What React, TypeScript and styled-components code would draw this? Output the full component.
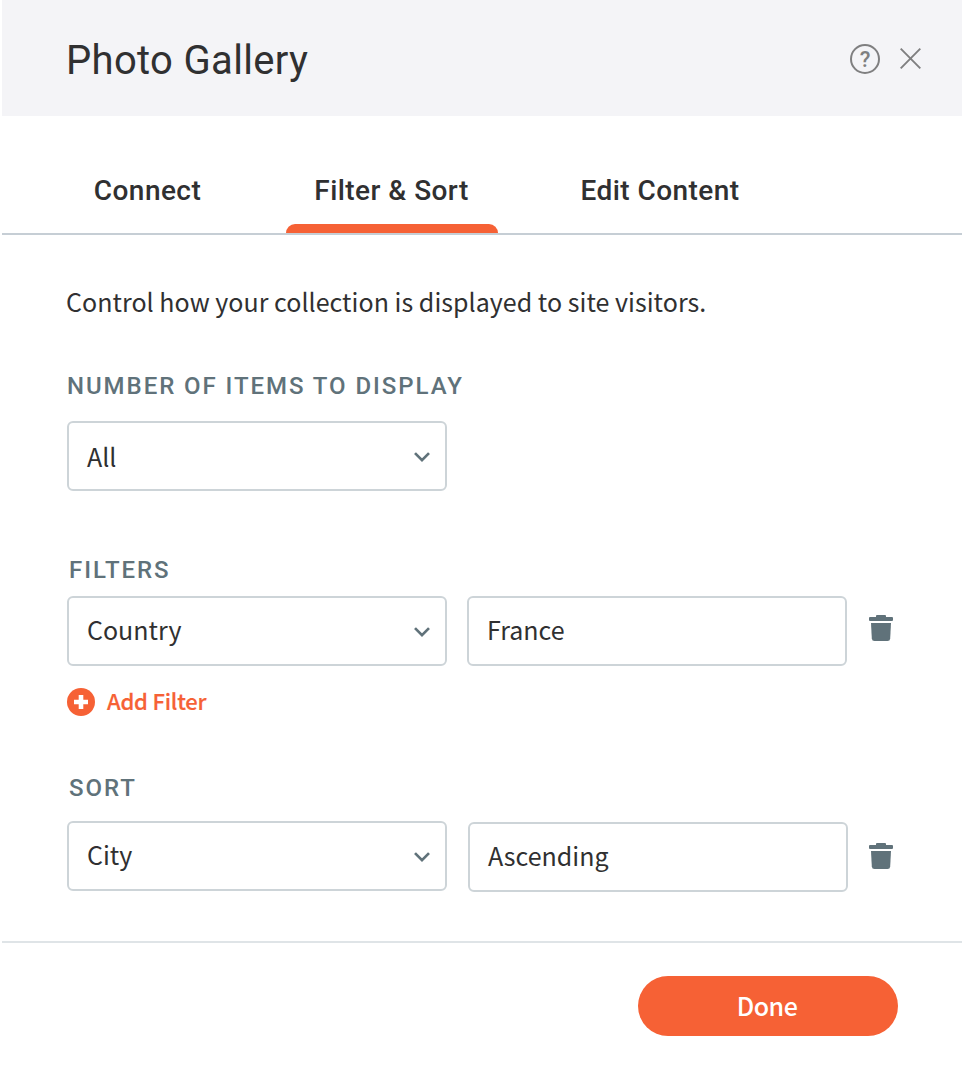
import React from "react";
import styled, { createGlobalStyle } from "styled-components";

const roboto = `Roboto, "Liberation Sans", sans-serif`;
const source = `"Noto Sans CJK SC", "Noto Sans", sans-serif`;

const color = {
  ink: "#303031",
  slate: "#60727a",
  border: "#cdd4d8",
  accent: "#f66135",
};

const GlobalStyle = createGlobalStyle`
  *, *::before, *::after { box-sizing: border-box; }
  body { margin: 0; background: #ffffff; }
  button { border: 0; padding: 0; background: none; cursor: pointer; }
  svg { display: block; }
`;

const Panel = styled.main`
  display: flex;
  flex-direction: column;
  width: 960px;
  height: 1068px;
  margin-left: 2px;
  color: ${color.ink};
  font-family: ${source};
`;

const Header = styled.header`
  display: flex;
  align-items: center;
  justify-content: space-between;
  height: 116px;
  padding: 0 41px 0 64px;
  background: #f4f4f7;
`;

const Title = styled.h1`
  margin: 5px 0 0;
  font: 400 40px/48px ${roboto};
  letter-spacing: 0.33px;
`;

const HeaderActions = styled.div`
  display: flex;
  align-items: center;
  gap: 20px;
  margin-top: 2px;
`;

const Tabs = styled.nav`
  display: flex;
  height: 119px;
  padding: 46px 0 0 56px;
  border-bottom: 2px solid #c6ced5;
`;

const Tab = styled.button<{ $width: number; $gap?: number; $active?: boolean }>`
  display: flex;
  flex-direction: column;
  align-items: center;
  justify-content: space-between;
  width: ${(p) => p.$width}px;
  margin-left: ${(p) => p.$gap ?? 0}px;
  color: ${color.ink};
  font: 500 28px/58px ${roboto};
  letter-spacing: 0.45px;
  white-space: nowrap;

  &::after {
    content: "";
    width: 100%;
    height: 9px;
    border-radius: 9px 9px 0 0;
    background: ${(p) => (p.$active ? color.accent : "transparent")};
  }
`;

const TabText = styled.span`
  padding-right: 1px;
`;

const Body = styled.div`
  display: flex;
  flex-direction: column;
  height: 706px;
  padding: 46px 0 0 65px;
`;

const Intro = styled.p`
  margin: 0 0 0 -1px;
  font-size: 25px;
  line-height: 40px;
  letter-spacing: 0.035px;
`;

const Section = styled.section<{ $top: number; $gap: number }>`
  display: flex;
  flex-direction: column;
  gap: ${(p) => p.$gap}px;
  margin-top: ${(p) => p.$top}px;
`;

const Label = styled.h2<{ $indent?: number }>`
  margin: 0 0 0 ${(p) => p.$indent ?? 0}px;
  color: ${color.slate};
  font: 500 24px/28px ${roboto};
  letter-spacing: 1.94px;
`;

const Row = styled.div<{ $gap?: number }>`
  display: flex;
  align-items: flex-start;
  gap: ${(p) => p.$gap ?? 20}px;
`;

const Field = styled.div<{ $drop?: number; $textShift?: number }>`
  display: flex;
  align-items: center;
  justify-content: space-between;
  width: 380px;
  height: 70px;
  margin-top: ${(p) => p.$drop ?? 0}px;
  padding: 0 15px 0 18px;
  border: 2px solid ${color.border};
  border-radius: 6px;
  background: #ffffff;
  font-size: 25px;
  line-height: 40px;

  span { margin-top: ${(p) => (p.$textShift ?? 0) - 4}px; }
  svg { margin-top: 1px; }
`;

const DeleteButton = styled.button<{ $top: number; $left: number }>`
  margin: ${(p) => p.$top}px 0 0 ${(p) => p.$left}px;
`;

const AddButton = styled.button`
  display: flex;
  align-items: center;
  gap: 12px;
  height: 28px;
  margin-top: 10px;
  color: ${color.accent};
  font: 500 22px/28px ${source};
  letter-spacing: -0.22px;
  -webkit-text-stroke: 0.2px currentColor;

  span { margin-top: -4px; }
`;

const Footer = styled.footer`
  display: flex;
  justify-content: flex-end;
  height: 127px;
  padding: 33px 64px 0 0;
  border-top: 2px solid #dfe4e7;
`;

const DoneButton = styled.button`
  width: 260px;
  height: 60px;
  padding-right: 2px;
  border-radius: 30px;
  background: ${color.accent};
  color: #ffffff;
  font: 500 25px/58px ${source};
  letter-spacing: -0.5px;

  span { display: block; margin-top: -2px; }
`;

const HelpMark = styled.span`
  display: flex;
  align-items: center;
  justify-content: center;
  width: 30px;
  height: 30px;
  padding-top: 1px;
  border: 2px solid #7f7f80;
  border-radius: 50%;
  color: #7f7f80;
  font: 500 22px/26px ${roboto};
`;

const CloseIcon = () => (
  <svg width="21" height="22" viewBox="0 0 21 22" fill="none" stroke="#7f7f80" strokeWidth="1.9">
    <path d="M.7.7 20.300 20.300M20.300.7.7 20.300" />
  </svg>
);

const Chevron = () => (
  <svg width="16" height="10" viewBox="0 0 16 10" fill="none" stroke={color.slate} strokeWidth="2.7">
    <path d="M1 1.1 8 8.1 15 1.1" />
  </svg>
);

const TrashIcon = () => (
  <svg width="24" height="26" viewBox="0 0 24 26" fill={color.slate}>
    <path d="M1 2h6V1q0-1 1-1h8q1 0 1 1v1h6q1 0 1 1v2q0 1-1 1H1q-1 0-1-1V3q0-1 1-1Z" />
    <path d="M2 8h20l-.8 15.5Q21 26 18.500 26H5.500Q3 26 2.800 23.500Z" />
  </svg>
);

const PlusIcon = () => (
  <svg width="28" height="28" viewBox="0 0 28 28">
    <circle cx="14" cy="14" r="14" fill={color.accent} />
    <path d="M14 7v14M7 14h14" stroke="#ffffff" strokeWidth="4.6" />
  </svg>
);

export default function App() {
  return (
    <>
      <GlobalStyle />
      <Panel>
        <Header>
          <Title>Photo Gallery</Title>
          <HeaderActions>
            <HelpMark>?</HelpMark>
            <CloseIcon />
          </HeaderActions>
        </Header>
        <Tabs>
          <Tab $width={180}><TabText>Connect</TabText></Tab>
          <Tab $width={212} $gap={48} $active><TabText>Filter &amp; Sort</TabText></Tab>
          <Tab $width={212} $gap={56}>Edit Content</Tab>
        </Tabs>
        <Body>
          <Intro>Control how your collection is displayed to site visitors.</Intro>
          <Section $top={51} $gap={21}>
            <Label>NUMBER OF ITEMS TO DISPLAY</Label>
            <Field $textShift={3}><span>All</span><Chevron /></Field>
          </Section>
          <Section $top={65} $gap={12}>
            <Label $indent={2}>FILTERS</Label>
            <Row>
              <Field><span>Country</span><Chevron /></Field>
              <Field><span>France</span></Field>
              <DeleteButton $top={19} $left={2} aria-label="Delete filter"><TrashIcon /></DeleteButton>
            </Row>
            <Row>
              <AddButton><PlusIcon /><span>Add Filter</span></AddButton>
            </Row>
          </Section>
          <Section $top={58} $gap={19}>
            <Label $indent={2}>SORT</Label>
            <Row $gap={21}>
              <Field><span>City</span><Chevron /></Field>
              <Field $drop={1}><span>Ascending</span></Field>
              <DeleteButton $top={22} $left={0} aria-label="Delete sort"><TrashIcon /></DeleteButton>
            </Row>
          </Section>
        </Body>
        <Footer>
          <DoneButton><span>Done</span></DoneButton>
        </Footer>
      </Panel>
    </>
  );
}
